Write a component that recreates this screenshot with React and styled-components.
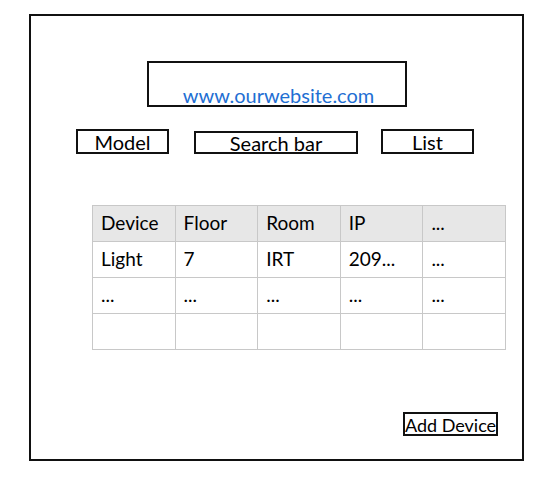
import React from 'react';
import styled, { createGlobalStyle } from 'styled-components';

const GlobalStyle = createGlobalStyle`
  body {
    margin: 0;
    background: #ffffff;
    font-family: Lato, "Open Sans", sans-serif;
    color: #000;
  }
`;

const Frame = styled.div`
  margin: 14px 0 0 29px;
  width: 495px;
  height: 447px;
  box-sizing: border-box;
  border: 2px solid #111;
  display: flex;
  flex-direction: column;
`;

const LogoBox = styled.div`
  margin: 45px auto 0;
  width: 260px;
  height: 46px;
  box-sizing: border-box;
  border: 2px solid #111;
  display: flex;
  align-items: flex-end;
  justify-content: center;
`;

const Link = styled.span`
  color: #1f6fd3;
  font-size: 20px;
  line-height: 1;
  padding-left: 4px;
`;

const Toolbar = styled.div`
  margin: 22px 0 0 45px;
  display: flex;
  align-items: flex-end;
`;

const ToolBox = styled.div`
  width: ${p => p.w}px;
  height: ${p => p.h}px;
  margin-right: ${p => p.gap || 0}px;
  box-sizing: border-box;
  border: 2px solid #111;
  display: flex;
  align-items: center;
  justify-content: center;
  font-size: 20px;
  line-height: 1;
  padding-top: 1px;
`;

const Table = styled.table`
  margin: 51px 0 0 61px;
  width: 414px;
  border-collapse: collapse;
  table-layout: fixed;
`;

const Cell = styled.td`
  height: 36px;
  box-sizing: border-box;
  border: 1px solid #c8c8c8;
  padding: 0 0 2px 8px;
  font-size: 19px;
  font-weight: normal;
  text-align: left;
  vertical-align: middle;
  background: ${p => (p.$head ? '#e7e7e7' : '#fff')};
`;

const Footer = styled.div`
  margin-top: auto;
  margin-bottom: 23px;
  display: flex;
  justify-content: flex-end;
  padding-right: 24px;
`;

const AddButton = styled.div`
  width: 95px;
  height: 24px;
  box-sizing: border-box;
  border: 2px solid #111;
  display: flex;
  align-items: center;
  justify-content: center;
  font-size: 18px;
  line-height: 1;
  white-space: nowrap;
  padding-top: 1px;
`;

const header = ['Device', 'Floor', 'Room', 'IP', '...'];
const rows = [
  ['Light', '7', 'IRT', '209...', '...'],
  ['...', '...', '...', '...', '...'],
  ['', '', '', '', ''],
];

export default function App() {
  return (
    <>
      <GlobalStyle />
      <Frame>
        <LogoBox>
          <Link>www.ourwebsite.com</Link>
        </LogoBox>
        <Toolbar>
          <ToolBox w={93} h={25} gap={25}>Model</ToolBox>
          <ToolBox w={164} h={23} gap={23}>Search bar</ToolBox>
          <ToolBox w={93} h={25}>List</ToolBox>
        </Toolbar>
        <Table>
          <thead>
            <tr>
              {header.map((h, i) => (
                <Cell as="th" $head key={i}>{h}</Cell>
              ))}
            </tr>
          </thead>
          <tbody>
            {rows.map((r, i) => (
              <tr key={i}>
                {r.map((c, j) => <Cell key={j}>{c}</Cell>)}
              </tr>
            ))}
          </tbody>
        </Table>
        <Footer>
          <AddButton>Add Device</AddButton>
        </Footer>
      </Frame>
    </>
  );
}
